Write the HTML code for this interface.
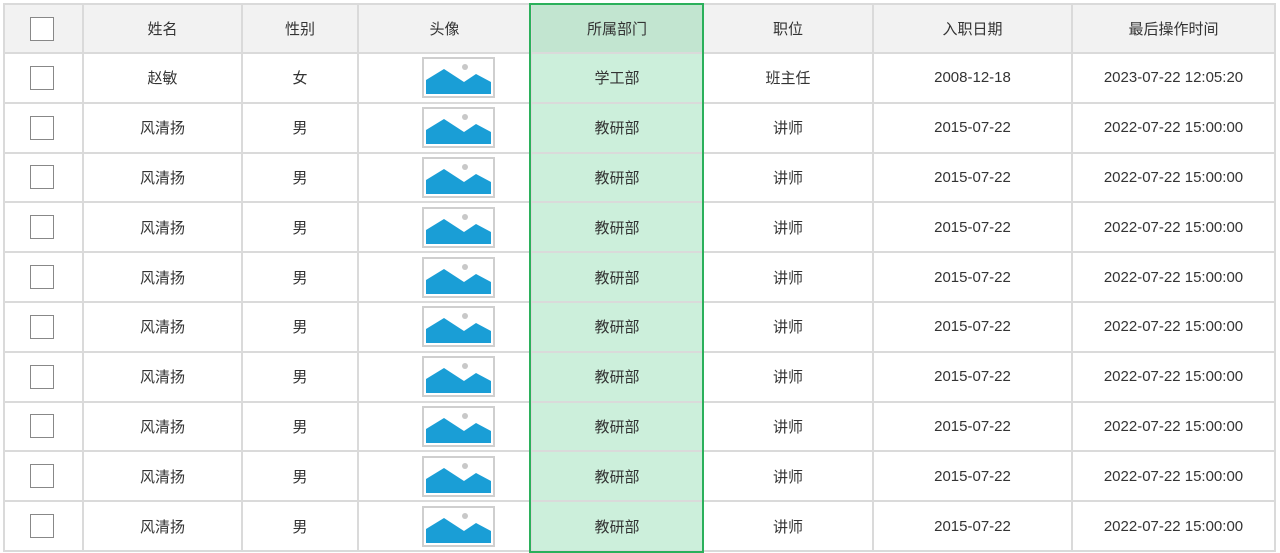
<!DOCTYPE html>
<html><head><meta charset="utf-8"><style>
body{margin:0;width:1280px;height:552px;background:#fff;overflow:hidden;font-family:"Liberation Sans","Noto Sans CJK SC",sans-serif;font-size:15px;color:#333;position:relative}
table{position:absolute;left:3px;top:3px;border-collapse:collapse;table-layout:fixed}
td,th{border:2px solid #dadada;text-align:center;padding:0;font-weight:normal;height:47.8px}
th{background:#f2f2f2;height:47px}
td.im{padding-left:28px}
.cb{display:inline-block;width:22px;height:22px;border:1px solid #888;background:#fff;vertical-align:middle;margin-right:4px}
.g{background:#ccefdb}
th.g{background:#c2e5d0}
.img{display:inline-block;vertical-align:middle;width:69px;height:37px;border:2px solid #cfcfcf;background:#fff;position:relative}
.img svg{position:absolute;left:0;top:0}
#hl{position:absolute;left:529px;top:3px;width:171px;height:546px;border:2px solid #2bb05b}
</style></head><body>
<table>
<colgroup><col style="width:79px"><col style="width:159px"><col style="width:116px"><col style="width:173px"><col style="width:172px"><col style="width:170px"><col style="width:199px"><col style="width:203px"></colgroup>
<tr><th><span class="cb"></span></th><th>姓名</th><th>性别</th><th>头像</th><th class="g">所属部门</th><th>职位</th><th>入职日期</th><th>最后操作时间</th></tr>
<tr><td><span class="cb"></span></td><td>赵敏</td><td>女</td><td class="im"><span class="img"><svg width="69" height="37"><circle cx="41" cy="8" r="3" fill="#c8c8c8"/><path d="M2 21 L20 10 L40 23 L52 15 L67 23 L67 35 L2 35Z" fill="#1a9ed6"/></svg></span></td><td class="g">学工部</td><td>班主任</td><td>2008-12-18</td><td>2023-07-22 12:05:20</td></tr>
<tr><td><span class="cb"></span></td><td>风清扬</td><td>男</td><td class="im"><span class="img"><svg width="69" height="37"><circle cx="41" cy="8" r="3" fill="#c8c8c8"/><path d="M2 21 L20 10 L40 23 L52 15 L67 23 L67 35 L2 35Z" fill="#1a9ed6"/></svg></span></td><td class="g">教研部</td><td>讲师</td><td>2015-07-22</td><td>2022-07-22 15:00:00</td></tr>
<tr><td><span class="cb"></span></td><td>风清扬</td><td>男</td><td class="im"><span class="img"><svg width="69" height="37"><circle cx="41" cy="8" r="3" fill="#c8c8c8"/><path d="M2 21 L20 10 L40 23 L52 15 L67 23 L67 35 L2 35Z" fill="#1a9ed6"/></svg></span></td><td class="g">教研部</td><td>讲师</td><td>2015-07-22</td><td>2022-07-22 15:00:00</td></tr>
<tr><td><span class="cb"></span></td><td>风清扬</td><td>男</td><td class="im"><span class="img"><svg width="69" height="37"><circle cx="41" cy="8" r="3" fill="#c8c8c8"/><path d="M2 21 L20 10 L40 23 L52 15 L67 23 L67 35 L2 35Z" fill="#1a9ed6"/></svg></span></td><td class="g">教研部</td><td>讲师</td><td>2015-07-22</td><td>2022-07-22 15:00:00</td></tr>
<tr><td><span class="cb"></span></td><td>风清扬</td><td>男</td><td class="im"><span class="img"><svg width="69" height="37"><circle cx="41" cy="8" r="3" fill="#c8c8c8"/><path d="M2 21 L20 10 L40 23 L52 15 L67 23 L67 35 L2 35Z" fill="#1a9ed6"/></svg></span></td><td class="g">教研部</td><td>讲师</td><td>2015-07-22</td><td>2022-07-22 15:00:00</td></tr>
<tr><td><span class="cb"></span></td><td>风清扬</td><td>男</td><td class="im"><span class="img"><svg width="69" height="37"><circle cx="41" cy="8" r="3" fill="#c8c8c8"/><path d="M2 21 L20 10 L40 23 L52 15 L67 23 L67 35 L2 35Z" fill="#1a9ed6"/></svg></span></td><td class="g">教研部</td><td>讲师</td><td>2015-07-22</td><td>2022-07-22 15:00:00</td></tr>
<tr><td><span class="cb"></span></td><td>风清扬</td><td>男</td><td class="im"><span class="img"><svg width="69" height="37"><circle cx="41" cy="8" r="3" fill="#c8c8c8"/><path d="M2 21 L20 10 L40 23 L52 15 L67 23 L67 35 L2 35Z" fill="#1a9ed6"/></svg></span></td><td class="g">教研部</td><td>讲师</td><td>2015-07-22</td><td>2022-07-22 15:00:00</td></tr>
<tr><td><span class="cb"></span></td><td>风清扬</td><td>男</td><td class="im"><span class="img"><svg width="69" height="37"><circle cx="41" cy="8" r="3" fill="#c8c8c8"/><path d="M2 21 L20 10 L40 23 L52 15 L67 23 L67 35 L2 35Z" fill="#1a9ed6"/></svg></span></td><td class="g">教研部</td><td>讲师</td><td>2015-07-22</td><td>2022-07-22 15:00:00</td></tr>
<tr><td><span class="cb"></span></td><td>风清扬</td><td>男</td><td class="im"><span class="img"><svg width="69" height="37"><circle cx="41" cy="8" r="3" fill="#c8c8c8"/><path d="M2 21 L20 10 L40 23 L52 15 L67 23 L67 35 L2 35Z" fill="#1a9ed6"/></svg></span></td><td class="g">教研部</td><td>讲师</td><td>2015-07-22</td><td>2022-07-22 15:00:00</td></tr>
<tr><td><span class="cb"></span></td><td>风清扬</td><td>男</td><td class="im"><span class="img"><svg width="69" height="37"><circle cx="41" cy="8" r="3" fill="#c8c8c8"/><path d="M2 21 L20 10 L40 23 L52 15 L67 23 L67 35 L2 35Z" fill="#1a9ed6"/></svg></span></td><td class="g">教研部</td><td>讲师</td><td>2015-07-22</td><td>2022-07-22 15:00:00</td></tr>
</table>
<div id="hl"></div>
</body></html>
